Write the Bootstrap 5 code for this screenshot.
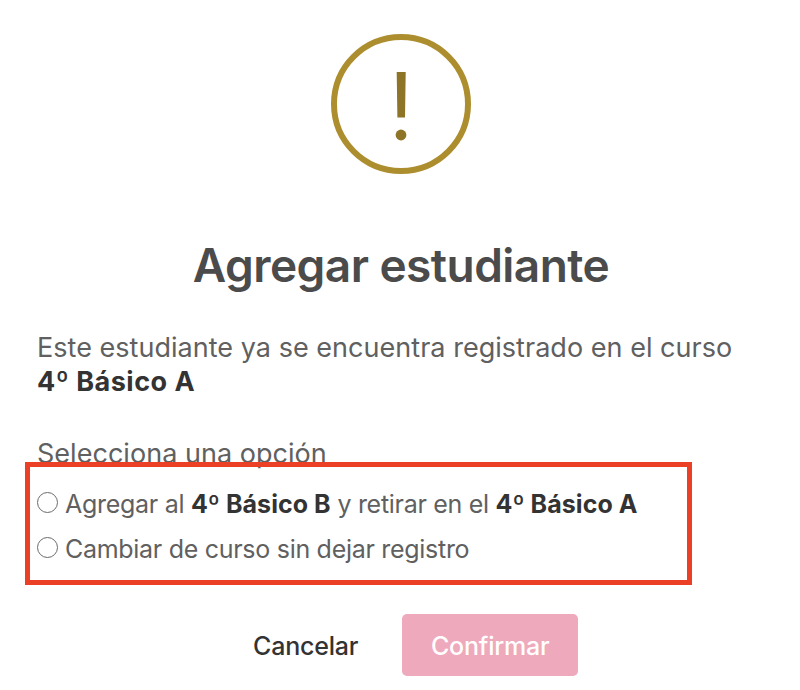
<!DOCTYPE html>
<html lang="es">
<head>
    <meta charset="UTF-8">
    <meta name="viewport" content="width=device-width, initial-scale=1.0">
    <title>Agregar estudiante</title>
    <link href="https://cdn.jsdelivr.net/npm/bootstrap@5.3.0/dist/css/bootstrap.min.css" rel="stylesheet">
    <style>
        body {
            font-family: Inter, "Liberation Sans", sans-serif;
            color: #606060;
            background-color: #fff;
        }
        .dialog-box {
            width: 800px;
            height: 690px;
            padding: 34px 38px 0 37px;
        }
        .dialog-head {
            padding-left: 3px;
        }
        .warning-icon {
            width: 140px;
            height: 140px;
        }
        .dialog-title {
            margin-top: 62px;
            font-size: 46px;
            font-weight: 600;
            line-height: 58px;
            letter-spacing: -.54px;
            color: #4b4b4b;
        }
        .dialog-text {
            margin-top: 37px;
            font-size: 27px;
            line-height: 34px;
            letter-spacing: .03px;
        }
        .dialog-text strong,
        .option-item strong {
            color: #333;
        }
        .dialog-text strong {
            letter-spacing: .5px;
        }
        .dialog-prompt {
            margin-top: 38px;
        }
        .option-list {
            margin-top: 11px;
            font-size: 25px;
            letter-spacing: -.29px;
        }
        .option-list strong {
            letter-spacing: .05px;
        }
        .option-item {
            height: 45px;
            line-height: 45px;
        }
        .option-item input {
            appearance: none;
            flex: none;
            width: 21px;
            height: 21px;
            margin: 0 7px 4px 0;
            border: 1px solid #6b6b6b;
            border-radius: 50%;
            background-color: #fff;
        }
        /* frame over the options, also covers the bottom of the prompt */
        .highlight-frame {
            left: 25px;
            top: 462px;
            width: 667px;
            height: 123px;
            border: 5px solid #ec4026;
            pointer-events: none;
        }
        .dialog-actions {
            margin-top: 42px;
            padding-left: 188px;
        }
        .dialog-actions .btn {
            height: 62px;
            padding: 4px 28px 0;
            border: 0;
            border-radius: 5px;
            font-size: 25px;
            font-weight: 500;
            letter-spacing: -.2px;
        }
        .dialog-actions .btn-cancel {
            color: #333;
        }
        .dialog-actions .btn-confirm,
        .dialog-actions .btn-confirm:hover {
            width: 176px;
            color: #fff;
            background-color: #efa9bc;
        }
    </style>
</head>
<body>
<div class="dialog-box position-relative overflow-hidden">
    <!-- Icon and title -->
    <div class="dialog-head text-center">
        <svg class="warning-icon d-block mx-auto" viewBox="0 0 140 140">
            <circle cx="70" cy="70" r="67" fill="none" stroke="#ad8e2f" stroke-width="6"/>
            <path d="M65.7 38h9l-.7 45.5h-7.6z" fill="#8d7426"/>
            <circle cx="70" cy="101" r="5.4" fill="#8d7426"/>
        </svg>
        <h1 class="dialog-title mb-0">Agregar estudiante</h1>
    </div>

    <!-- Message -->
    <div class="dialog-text">
        <p class="mb-0 text-nowrap">Este estudiante ya se encuentra registrado en el curso<br><strong>4º Básico A</strong></p>
        <p class="dialog-prompt mb-0">Selecciona una opción</p>
    </div>

    <!-- Options -->
    <form class="option-list">
        <label class="option-item d-flex align-items-center text-nowrap">
            <input type="radio" name="option">
            <span>Agregar al <strong>4º Básico B</strong> y retirar en el <strong>4º Básico A</strong></span>
        </label>
        <label class="option-item d-flex align-items-center text-nowrap">
            <input type="radio" name="option">
            <span>Cambiar de curso sin dejar registro</span>
        </label>
    </form>
    <div class="highlight-frame position-absolute"></div>

    <!-- Buttons -->
    <div class="dialog-actions d-flex">
        <button type="button" class="btn btn-cancel me-3">Cancelar</button>
        <button type="button" class="btn btn-confirm">Confirmar</button>
    </div>
</div>
<script src="https://cdn.jsdelivr.net/npm/bootstrap@5.3.0/dist/js/bootstrap.bundle.min.js"></script>
</body>
</html>
